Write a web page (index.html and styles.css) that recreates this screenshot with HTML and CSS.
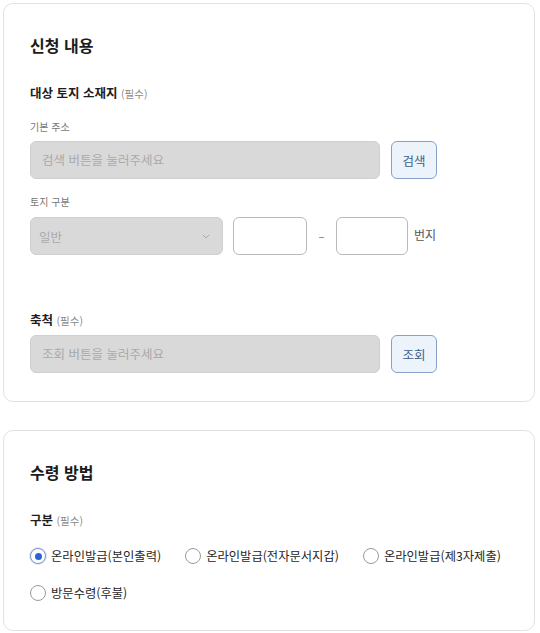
FILE: index.html
```html
<!DOCTYPE html>
<html lang="ko">
<head>
<meta charset="utf-8">
<link rel="stylesheet" href="styles.css">
</head>
<body>
<div class="page">
  <section class="card card-apply">
    <h2 class="card-title">신청 내용</h2>

    <div class="field-label label-first">대상 토지 소재지 <span class="req">(필수)</span></div>
    <div class="sub-label sub-first">기본 주소</div>
    <div class="row">
      <div class="input disabled wide">검색 버튼을 눌러주세요</div>
      <button class="btn">검색</button>
    </div>

    <div class="sub-label sub-second">토지 구분</div>
    <div class="row row-lot">
      <div class="select disabled">
        <span>일반</span>
        <svg class="chev" width="8" height="5" viewBox="0 0 8 5"><path d="M0.8 0.8 L4 4 L7.2 0.8" fill="none" stroke="#a8a8a8" stroke-width="1"/></svg>
      </div>
      <div class="input box-a"></div>
      <span class="dash">–</span>
      <div class="input box-b"></div>
      <span class="unit">번지</span>
    </div>

    <div class="field-label label-scale">축척 <span class="req">(필수)</span></div>
    <div class="row row-scale">
      <div class="input disabled wide">조회 버튼을 눌러주세요</div>
      <button class="btn">조회</button>
    </div>
  </section>

  <section class="card card-receive">
    <h2 class="card-title">수령 방법</h2>
    <div class="field-label label-first">구분 <span class="req">(필수)</span></div>
    <div class="radios">
      <label class="radio"><span class="dot checked"></span>온라인발급(본인출력)</label>
      <label class="radio"><span class="dot"></span>온라인발급(전자문서지갑)</label>
      <label class="radio"><span class="dot"></span>온라인발급(제3자제출)</label>
      <label class="radio"><span class="dot"></span>방문수령(후불)</label>
    </div>
  </section>
</div>
</body>
</html>
```

FILE: styles.css
```css
* { box-sizing: border-box; }
html, body { margin: 0; padding: 0; background: #ffffff; }
body {
  font-family: "Noto Sans CJK KR", "Noto Sans", sans-serif;
  color: #222;
}
.page {
  padding: 3px 5px 0 3px;
  display: flex;
  flex-direction: column;
  gap: 28px;
}
.card {
  border: 1px solid #e2e2e2;
  border-radius: 10px;
  padding: 31px 26px 28px 26px;
  display: flex;
  flex-direction: column;
}
.card-title {
  margin: 0;
  font-size: 16px;
  line-height: 20px;
  font-weight: 700;
  color: #1b1b1b;
}
.field-label {
  font-size: 12.5px;
  line-height: 16px;
  font-weight: 700;
  color: #1e1e1e;
}
.label-first { margin-top: 30px; }
.label-scale { margin-top: 57px; }
.req {
  font-size: 10.5px;
  font-weight: 400;
  color: #8a8a8a;
}
.sub-label {
  font-size: 10px;
  line-height: 14px;
  color: #777;
}
.sub-first { margin-top: 18px; }
.sub-second { margin-top: 16px; }
.row {
  margin-top: 7px;
  display: flex;
  align-items: center;
  height: 38px;
}
.row-lot { margin-top: 8px; }
.row-scale { margin-top: 6px; }
.input {
  height: 38px;
  border: 1px solid #b9b9b9;
  border-radius: 6px;
  background: #fff;
}
.input.disabled, .select.disabled {
  background: #d9d9d9;
  border-color: #cfcfcf;
  color: #a9a9a9;
}
.wide {
  width: 350px;
  font-size: 12.5px;
  line-height: 36px;
  padding-left: 11px;
}
.btn {
  margin-left: 11px;
  width: 46px;
  height: 38px;
  border: 1px solid #86a1c6;
  border-radius: 6px;
  background: #edf3fb;
  color: #3f5d8a;
  font-family: inherit;
  font-size: 12.5px;
  padding: 0;
}
.select {
  width: 193px;
  height: 38px;
  border: 1px solid #cfcfcf;
  border-radius: 6px;
  display: flex;
  align-items: center;
  justify-content: space-between;
  padding: 0 12px 0 8px;
  font-size: 12.5px;
  color: #b3b3b3;
}
.chev { margin-top: 1px; }
.box-a { width: 74px; margin-left: 10px; }
.dash {
  width: 29px;
  text-align: center;
  font-size: 11px;
  color: #666;
}
.box-b { width: 72px; }
.unit {
  margin-left: 6px;
  font-size: 12px;
  color: #555;
  margin-top: -4px;
}
.radios {
  margin-top: 18px;
  display: flex;
  flex-wrap: wrap;
  column-gap: 24px;
  row-gap: 19px;
}
.radio {
  display: flex;
  align-items: center;
  gap: 5px;
  font-size: 12.3px;
  line-height: 18px;
  color: #262626;
}
.dot {
  width: 16px;
  height: 16px;
  border: 1px solid #9a9a9a;
  border-radius: 50%;
  display: flex;
  align-items: center;
  justify-content: center;
  background: #fff;
}
.dot.checked {
  border-color: #7c98cc;
  box-shadow: 0 0 0 1px #dbe5f7;
}
.dot.checked::after {
  content: "";
  width: 7px;
  height: 7px;
  border-radius: 50%;
  background: #2c64d6;
}
```
